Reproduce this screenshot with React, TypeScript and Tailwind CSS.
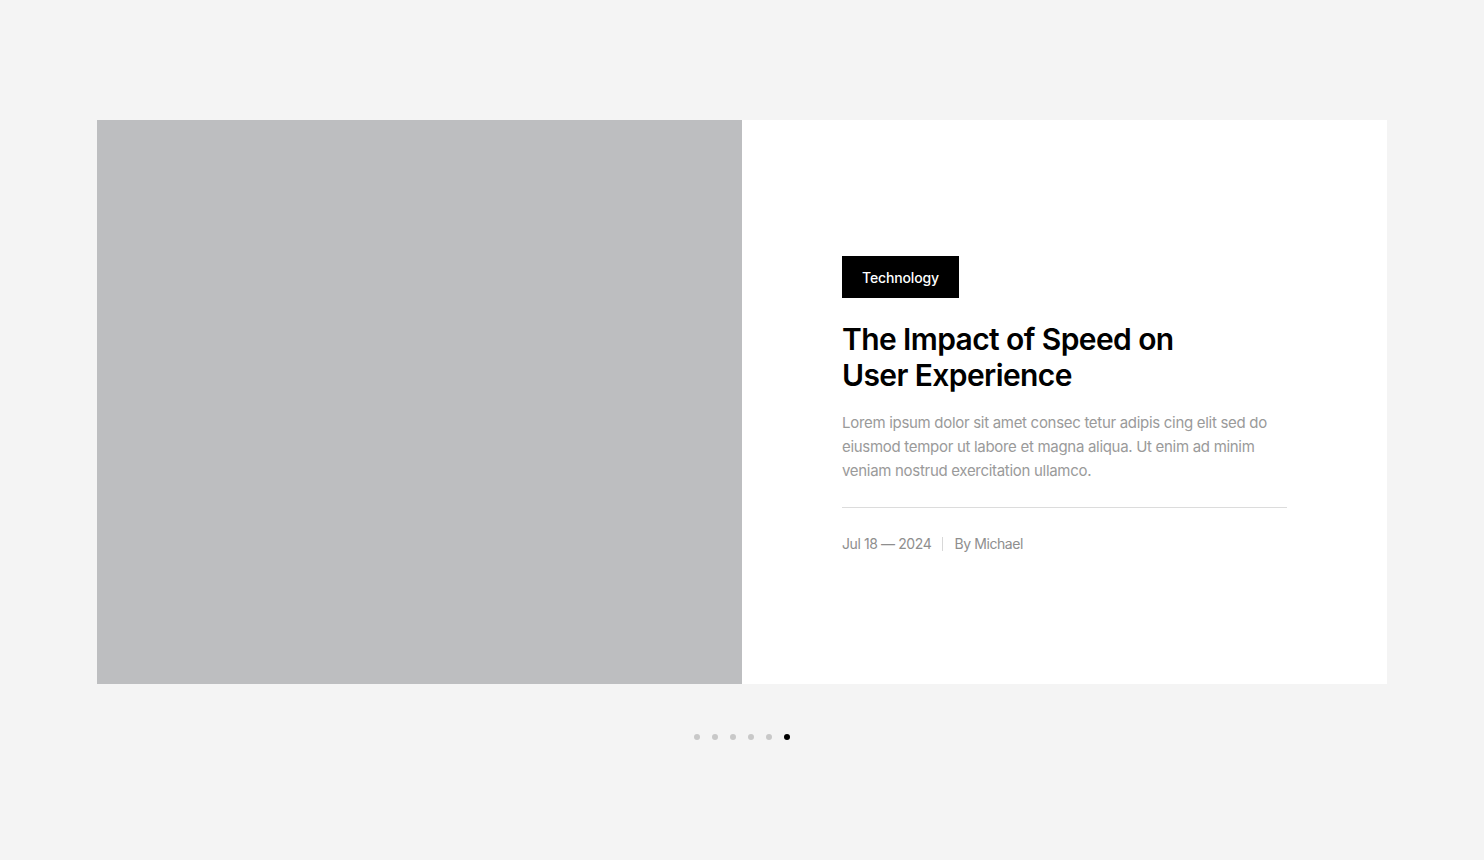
import React from "react";

export default function App() {
  const dots = [0, 1, 2, 3, 4, 5];
  return (
    <div className="min-h-[860px] w-full bg-[#f4f4f4] pt-[120px]" style={{ fontFamily: "Inter, 'Noto Sans', sans-serif" }}>
      <div className="mx-[97px] flex h-[564px]">
        <div className="w-1/2 bg-[#bdbec0]" />
        <div className="flex w-1/2 flex-col justify-center bg-white pl-[100px] pr-[100px] pt-[6px]">
          <div className="flex">
            <span className="flex h-[42px] items-center bg-black px-[20px] text-[14px] font-medium tracking-[-0.15px] text-white">
              Technology
            </span>
          </div>
          <h2 className="mt-[23px] text-[30px] font-semibold leading-[36px] tracking-[-0.6px] text-black">
            The Impact of Speed on
            <br />
            User Experience
          </h2>
          <p className="mt-[18px] whitespace-nowrap text-[15px] leading-[24px] tracking-[-0.3px] text-[#9a9a9a]">
            Lorem ipsum dolor sit amet consec tetur adipis cing elit sed do
            <br />
            eiusmod tempor ut labore et magna aliqua. Ut enim ad minim
            <br />
            veniam nostrud exercitation ullamco.
          </p>
          <div className="mt-[24px] h-px w-full bg-[#dcdcdc]" />
          <div className="mt-[26px] flex items-center text-[14px] leading-[20px] tracking-[-0.4px] text-[#8e8e8e]">
            <span>Jul 18 — 2024</span>
            <span className="mx-[11px] h-[14px] w-px bg-[#d8d8d8]" />
            <span>By Michael</span>
          </div>
        </div>
      </div>
      <div className="mt-[50px] flex justify-center gap-[12px]">
        {dots.map((i) => (
          <span
            key={i}
            className={i === 5 ? "h-[6px] w-[6px] rounded-full bg-black" : "h-[6px] w-[6px] rounded-full bg-[#c8c8c8]"}
          />
        ))}
      </div>
    </div>
  );
}
